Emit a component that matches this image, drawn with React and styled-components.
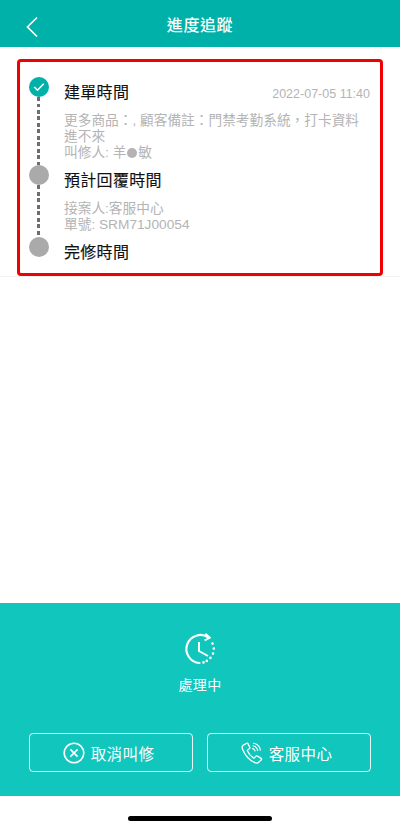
import React from "react";
import styled, { createGlobalStyle } from "styled-components";

const GlobalStyle = createGlobalStyle`
  html, body {
    margin: 0;
    padding: 0;
    background: #fff;
  }
  * {
    box-sizing: border-box;
  }
`;

const App = () => {
  return (
    <Page>
      <GlobalStyle />
      <Header>
        <BackButton>
          <svg width="14" height="22" viewBox="0 0 14 22" fill="none">
            <path d="M12 1.5 2.5 11l9.5 9.5" stroke="#fff" strokeWidth="1.7" />
          </svg>
        </BackButton>
        <HeaderTitle>進度追蹤</HeaderTitle>
      </Header>

      <Main>
        <TimelineSection>
          <Timeline>
            {steps.map((step) => (
              <Step key={step.title} $height={step.height}>
                <Marker>
                  <Dot $done={step.done}>
                    {step.done && (
                      <svg width="12" height="10" viewBox="0 0 12 10" fill="none">
                        <path d="M1.2 5 4.5 8.2l6.2-6.4" stroke="#fff" strokeWidth="1.6" />
                      </svg>
                    )}
                  </Dot>
                  {!step.last && <Dashes />}
                </Marker>
                <StepBody>
                  <StepHead>
                    <StepTitle>{step.title}</StepTitle>
                    {step.time && <StepTime>{step.time}</StepTime>}
                  </StepHead>
                  {step.lines.length > 0 && (
                    <StepText>
                      {step.lines.map((line, i) => (
                        <div key={i}>{line}</div>
                      ))}
                    </StepText>
                  )}
                </StepBody>
              </Step>
            ))}
          </Timeline>
        </TimelineSection>
      </Main>

      <StatusPanel>
        <Status>
          <svg width="34" height="34" viewBox="0 0 34 34" fill="none" stroke="#fff" strokeWidth="2.2">
            <path d="M25.5 5.6A14 14 0 1 0 16.5 31" strokeLinecap="round" />
            <path d="M22.4 1.8 27 5.8l-5.4 2.6" strokeWidth="1.8" strokeLinejoin="round" />
            <path d="M16 10v9l9 5" strokeWidth="2" />
            <path
              d="M29.5 11.5v.1M30.8 16.5v.1M30 21.5v.1M27.4 25.8v.1M23.8 28.8v.1M20.5 30.4v.1"
              strokeWidth="2.6"
              strokeLinecap="round"
            />
          </svg>
          <StatusLabel>處理中</StatusLabel>
        </Status>
        <Actions>
          <ActionButton>
            <svg width="22" height="22" viewBox="0 0 22 22" fill="none" stroke="#fff" strokeWidth="1.6">
              <circle cx="11" cy="11" r="9.8" />
              <path d="m7.4 7.4 7.2 7.2M14.6 7.4l-7.2 7.2" />
            </svg>
            取消叫修
          </ActionButton>
          <ActionButton>
            <svg width="22" height="22" viewBox="0 0 22 22" fill="none" stroke="#fff" strokeWidth="1.3">
              <path d="M5.6 1.2 2 3.4C.9 4.2 1 6 1.9 8c2.4 5.6 6.6 10.2 11.5 12.4 1.7.8 3.4.8 4.3-.1l2.7-2.6c.4-.4.3-1-.2-1.3l-3.9-2.4c-.4-.3-.9-.2-1.2.1l-1.6 1.7c-.3.3-.7.3-1.1.1-2.5-1.5-4.6-4-5.9-6.9-.2-.4-.1-.8.2-1l1.8-1.4c.4-.3.5-.8.3-1.2L6.9 1.6c-.3-.5-.9-.7-1.3-.4Z" />
              <path d="M11.2 6.4c1.5.3 2.6 1.4 3 3M11.6 3.8c2.9.4 4.8 2.4 5.2 5.2M12 1.2c4 .5 6.9 3.3 7.4 7.4" strokeWidth="1.1" />
            </svg>
            客服中心
          </ActionButton>
        </Actions>
      </StatusPanel>

      <HomeBar>
        <HomeIndicator />
      </HomeBar>
    </Page>
  );
};

const Page = styled.div`
  width: 400px;
  height: 829px;
  display: flex;
  flex-direction: column;
  overflow: hidden;
  background: #fff;
  font-family: "Liberation Sans", "Noto Sans CJK TC", sans-serif;
`;

const Header = styled.header`
  height: 47px;
  flex: none;
  position: relative;
  display: flex;
  align-items: center;
  justify-content: center;
  background: #00b1a9;
`;

const BackButton = styled.div`
  position: absolute;
  left: 25px;
  top: 16px;
  display: flex;
`;

const HeaderTitle = styled.h1`
  margin: 0;
  color: #fff;
  font-size: 16px;
  font-weight: 500;
  letter-spacing: 0.6px;
`;

const Main = styled.main`
  flex: 1;
`;

const TimelineSection = styled.section`
  padding: 12px 17px 0;
  border-bottom: 1px solid #f2f2f2;
`;

const Timeline = styled.div`
  height: 217px;
  padding: 15px 10px 0 9px;
  border: 3px solid #f00000;
  border-radius: 4px;
`;

const Step = styled.div`
  display: flex;
  gap: 15px;
  height: ${(props) => props.$height}px;
`;

const Marker = styled.div`
  width: 20px;
  flex: none;
  display: flex;
  flex-direction: column;
  align-items: center;
`;

const Dot = styled.div`
  width: 20px;
  height: 20px;
  flex: none;
  border-radius: 50%;
  display: flex;
  align-items: center;
  justify-content: center;
  background: ${(props) => (props.$done ? "#00b1a9" : "#aaaaaa")};
`;

const Dashes = styled.div`
  flex: 1;
  width: 3px;
  margin-right: 2px;
  background: repeating-linear-gradient(to bottom, #6e6e6e 0 4px, transparent 4px 6.5px);
`;

const StepBody = styled.div`
  flex: 1;
  min-width: 0;
`;

const StepHead = styled.div`
  display: flex;
  align-items: center;
  justify-content: space-between;
  height: 28px;
`;

const StepTitle = styled.div`
  color: #111;
  font-size: 16px;
  letter-spacing: 0.3px;
  -webkit-text-stroke: 0.12px #111;
`;

const StepTime = styled.div`
  color: #b4b4b4;
  font-size: 12.5px;
  margin-top: 6px;
`;

const StepText = styled.div`
  margin-top: 8px;
  color: #b4b4b4;
  font-size: 13.7px;
  line-height: 16px;
`;

const MaskDot = styled.span`
  display: inline-block;
  width: 10px;
  height: 10px;
  margin: 0 1px;
  border-radius: 50%;
  background: #b4b4b4;
  vertical-align: -1px;
`;

const StatusPanel = styled.div`
  height: 193px;
  flex: none;
  padding: 29px 29px 0;
  display: flex;
  flex-direction: column;
  background: #10c6bd;
`;

const Status = styled.div`
  height: 101px;
  display: flex;
  flex-direction: column;
  align-items: center;
  gap: 8px;
  color: #fff;
`;

const StatusLabel = styled.div`
  font-size: 14px;
  letter-spacing: 0.3px;
`;

const Actions = styled.div`
  display: grid;
  grid-template-columns: 164px 164px;
  gap: 14px;
`;

const ActionButton = styled.div`
  height: 39px;
  padding-right: 5px;
  display: flex;
  align-items: center;
  justify-content: center;
  gap: 6px;
  color: #fff;
  font-size: 15.5px;
  letter-spacing: 0.4px;
  border: 1.5px solid #e6f8f7;
  border-radius: 4px;
`;

const HomeBar = styled.div`
  height: 33px;
  flex: none;
  display: flex;
  justify-content: center;
  padding-top: 20px;
`;

const HomeIndicator = styled.div`
  width: 144px;
  height: 5px;
  border-radius: 3px;
  background: #000;
`;

const steps = [
  {
    title: "建單時間",
    time: "2022-07-05 11:40",
    done: true,
    height: 88,
    lines: [
      "更多商品：, 顧客備註：門禁考勤系統，打卡資料進不來",
      <>
        叫修人: 羊<MaskDot />敏
      </>,
    ],
  },
  {
    title: "預計回覆時間",
    height: 72,
    lines: ["接案人:客服中心", "單號: SRM71J00054"],
  },
  { title: "完修時間", last: true, height: 35, lines: [] },
];

export default App;
